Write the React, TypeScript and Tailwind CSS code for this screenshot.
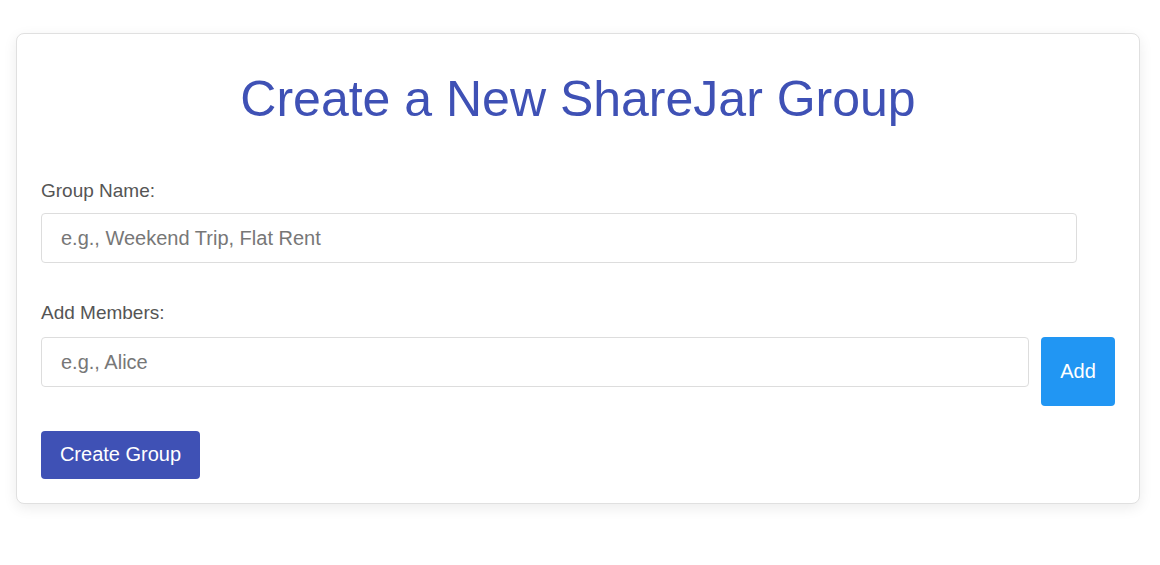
export default function App() {
  return (
    <div
      className="min-h-screen bg-white pt-[33px]"
      style={{ fontFamily: '"Liberation Sans", Arial, sans-serif' }}
    >
      <div className="ml-[16px] w-[1124px] rounded-lg border border-[#e0e0e0] bg-white p-6 shadow-[0_4px_14px_rgba(0,0,0,0.08)]">
        <h1 className="mt-[13px] text-center text-[50px] font-normal leading-[57px] text-[#3f51b5]">
          Create a New ShareJar Group
        </h1>

        <label className="mt-[52px] block text-[19px] leading-[22px] text-[#555]">
          Group Name:
        </label>
        <input
          type="text"
          placeholder="e.g., Weekend Trip, Flat Rent"
          className="mt-[11px] block h-[50px] w-[1036px] rounded border border-[#ddd] px-[19px] text-[20px] text-[#333] outline-none placeholder:text-[#777]"
        />

        <label className="mt-[39px] block text-[19px] leading-[22px] text-[#555]">
          Add Members:
        </label>
        <div className="mt-[13px] flex items-start gap-[12px]">
          <input
            type="text"
            placeholder="e.g., Alice"
            className="block h-[50px] min-w-0 flex-1 rounded border border-[#ddd] px-[19px] text-[20px] text-[#333] outline-none placeholder:text-[#777]"
          />
          <button className="h-[69px] w-[74px] rounded bg-[#2196f3] pb-px text-[20px] text-white">
            Add
          </button>
        </div>

        <button className="mt-[25px] block h-[48px] w-[159px] rounded bg-[#3f51b5] pb-[2px] text-[20px] text-white">
          Create Group
        </button>
      </div>
    </div>
  );
}
